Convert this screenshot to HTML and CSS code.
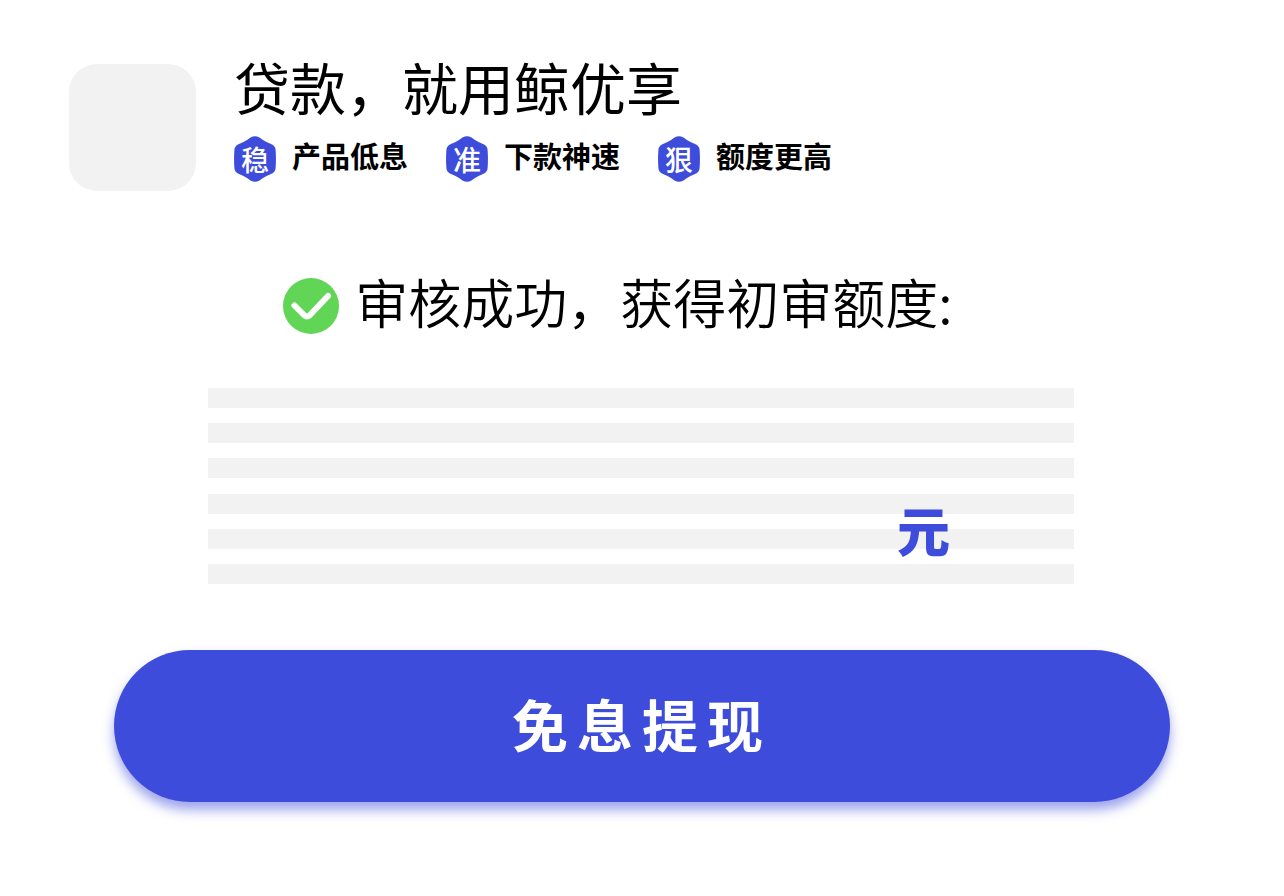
FILE: index.html
```html
<!DOCTYPE html>
<html lang="zh-CN">
<head>
<meta charset="utf-8">
<meta name="viewport" content="width=device-width, initial-scale=1">
<title>鲸优享</title>
<link rel="stylesheet" href="styles.css">
</head>
<body>
<svg class="defs" width="0" height="0" aria-hidden="true">
  <symbol id="hexagon" viewBox="0 0 42 46">
    <path d="M16.500 1.500Q21 -1.200 25.500 1.500L29 4Q32 6 37 8Q41.500 9.800 41.600 14Q42.300 23 41.600 32Q41.500 36.200 37 38Q32 40 29 42L25.500 44.500Q21 47.200 16.500 44.500L13 42Q10 40 5 38Q.5 36.200 .4 32Q-.3 23 .4 14Q.5 9.800 5 8Q10 6 13 4Z"/>
  </symbol>
</svg>
<header class="header">
  <div class="logo"></div>
  <div class="brand">
    <h1 class="title">贷款，就用鲸优享</h1>
    <ul class="features">
      <li class="feature"><span class="badge"><svg class="badge-shape"><use href="#hexagon"/></svg><span class="badge-text">稳</span></span>产品低息</li>
      <li class="feature"><span class="badge"><svg class="badge-shape"><use href="#hexagon"/></svg><span class="badge-text">准</span></span>下款神速</li>
      <li class="feature"><span class="badge"><svg class="badge-shape"><use href="#hexagon"/></svg><span class="badge-text">狠</span></span>额度更高</li>
    </ul>
  </div>
</header>
<main class="main">
  <h2 class="status">
    <svg class="check" viewBox="0 0 56 56" aria-hidden="true"><circle cx="28" cy="28" r="28"/><path d="M11.500 27.500L21.500 37.500Q24 39.500 26.500 37.500L45 18"/></svg>
    审核成功，获得初审额度:
  </h2>
  <div class="amount">
    <div class="bar"></div>
    <div class="bar"></div>
    <div class="bar"></div>
    <div class="bar"></div>
    <div class="bar"></div>
    <div class="bar"></div>
    <span class="unit">元</span>
  </div>
  <button class="withdraw" type="button">免息提现</button>
</main>
</body>
</html>
```
FILE: styles.css
```css
* {
  box-sizing: border-box;
}

body {
  margin: 0;
  background: #fff;
  color: #000;
  font-family: "Noto Sans CJK SC", sans-serif;
}

.defs {
  position: absolute;
}

.header {
  display: flex;
  gap: 38px;
  padding: 64px 69px 0;
}

.logo {
  flex: none;
  width: 127px;
  height: 127px;
  border-radius: 28px;
  background: #f2f2f2;
}

.title {
  margin: 0;
  font-size: 56px;
  font-weight: 400;
  line-height: 44px;
}

.features {
  display: flex;
  flex-wrap: wrap;
  gap: 8px 38px;
  margin: 28px 0 0;
  padding: 0;
  list-style: none;
}

.feature {
  display: flex;
  gap: 16px;
  font-size: 29px;
  font-weight: 700;
  line-height: 38px;
}

.badge {
  position: relative;
  display: grid;
  place-items: center;
  width: 42px;
  height: 46px;
  color: #fff;
}

.badge-shape {
  position: absolute;
  inset: 0;
  width: 100%;
  height: 100%;
  fill: #3e4cdb;
}

.badge-text {
  position: relative;
  font-size: 28px;
  font-weight: 500;
  line-height: 44px;
}

.main {
  display: flex;
  flex-direction: column;
  padding: 77px 114px;
}

.status {
  display: flex;
  align-items: flex-end;
  justify-content: center;
  gap: 16px;
  margin: 0 48px 0 0;
  font-size: 53px;
  font-weight: 350;
  line-height: 66px;
}

.check {
  flex: none;
  width: 56px;
  height: 56px;
}

.check circle {
  fill: #60d556;
}

.check path {
  fill: none;
  stroke: #fff;
  stroke-width: 6;
  stroke-linecap: round;
  stroke-linejoin: round;
}

.amount {
  position: relative;
  display: flex;
  flex-direction: column;
  justify-content: space-between;
  min-height: 196px;
  margin: 54px 96px 0 94px;
}

.bar {
  height: 20px;
  background: #f2f2f2;
}

.unit {
  position: absolute;
  right: 124px;
  bottom: 27px;
  color: #3e4cdb;
  font-size: 53px;
  font-weight: 900;
  line-height: 56px;
}

.withdraw {
  margin: 66px 0 0;
  padding: 33px 0 39px;
  border: 0;
  border-radius: 76px;
  background: #3e4cdb;
  box-shadow: 0 8px 12px rgba(62, 76, 219, 0.5);
  color: #fff;
  font-family: inherit;
  font-size: 56px;
  font-weight: 700;
  line-height: 80px;
  letter-spacing: 9px;
  cursor: pointer;
}
```
